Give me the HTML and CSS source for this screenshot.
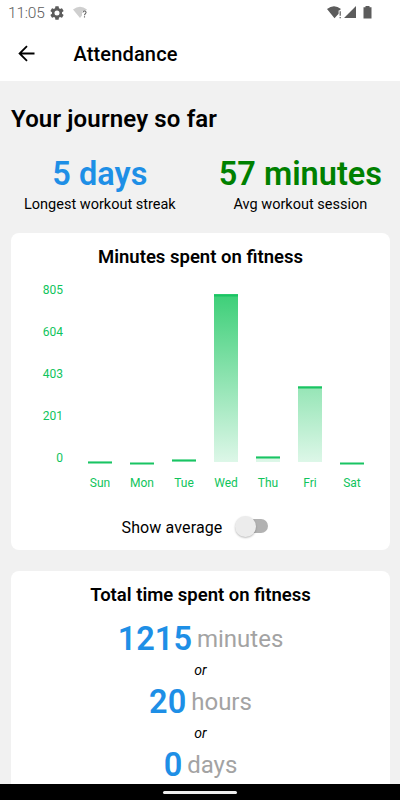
FILE: index.html
```html
<!DOCTYPE html>
<html lang="en">
<head>
<meta charset="utf-8">
<title>Attendance</title>
<link rel="stylesheet" href="styles.css">
</head>
<body>
<div class="phone">
  <div class="status">
    <span class="clock">11:05</span>
    <svg class="gear" width="14" height="14" viewBox="2 2 20 20"><path fill="#5c5c5c" d="M19.14 12.94c.04-.3.06-.61.06-.94s-.02-.64-.07-.94l2.03-1.58a.49.49 0 0 0 .12-.61l-1.92-3.32a.49.49 0 0 0-.59-.22l-2.39.96a7 7 0 0 0-1.62-.94l-.36-2.54a.48.48 0 0 0-.48-.41h-3.84a.48.48 0 0 0-.47.41l-.36 2.54c-.59.24-1.13.57-1.62.94l-2.39-.96a.48.48 0 0 0-.59.22L2.74 8.87a.48.48 0 0 0 .12.61l2.03 1.58a6 6 0 0 0 0 1.88l-2.03 1.58a.49.49 0 0 0-.12.61l1.92 3.32c.12.22.37.29.59.22l2.39-.96c.5.38 1.03.7 1.62.94l.36 2.54c.05.24.24.41.48.41h3.84c.24 0 .44-.17.47-.41l.36-2.54a7 7 0 0 0 1.62-.94l2.39.96c.22.08.47 0 .59-.22l1.92-3.32a.48.48 0 0 0-.12-.61zM12 15.6a3.6 3.6 0 1 1 0-7.2 3.6 3.6 0 0 1 0 7.2z"/></svg>
    <svg class="wifi-q" width="16" height="14" viewBox="0 0 16 14"><path fill="#cfcfcf" d="M0 3.4Q7-1.8 14 3.4L12.5 5H9v4.5L7 12z"/><path fill="none" stroke="#666" stroke-width="1.1" d="M9.9 6.5q.2-1.5 1.6-1.5t1.6 1.3c0 1.2-1.6 1.4-1.6 3M11.5 10.3v1.3"/></svg>
    <svg class="system" width="46" height="14" viewBox="0 0 46 14"><path fill="#5c5c5c" d="M0 2.9Q7-2.2 14 2.9L12.3 4.4H11.6V7.8L7.5 12.3zM12.6 5.2h1.2v4.6h-1.2zM12.6 10.9h1.2V12.2h-1.2zM29 0v12H17zM36.5 1.2h2V0h4v1.2h2V12.6h-8z"/></svg>
  </div>
  <header class="appbar">
    <svg class="back" width="18" height="18" viewBox="0 0 18 18"><path fill="none" stroke="#000" stroke-width="1.8" d="M16.5 8.5H2M9 1.1 1.6 8.5 9 15.9"/></svg>
    <h1>Attendance</h1>
  </header>
  <main>
    <h2>Your journey so far</h2>
    <section class="stats">
      <div class="stat"><strong class="blue">5 days</strong><span>Longest workout streak</span></div>
      <div class="stat"><strong class="green">57 minutes</strong><span>Avg workout session</span></div>
    </section>
    <section class="card chart-card">
      <h3>Minutes spent on fitness</h3>
      <div class="chart">
        <div class="axis"><span>805</span><span>604</span><span>403</span><span>201</span><span>0</span></div>
        <div class="columns">
          <div class="col"><div class="bar" style="height:1px"></div><span>Sun</span></div>
          <div class="col"><div class="bar" style="height:0px"></div><span>Mon</span></div>
          <div class="col"><div class="bar" style="height:3px"></div><span>Tue</span></div>
          <div class="col"><div class="bar" style="height:168px"></div><span>Wed</span></div>
          <div class="col"><div class="bar" style="height:6px"></div><span>Thu</span></div>
          <div class="col"><div class="bar" style="height:76px"></div><span>Fri</span></div>
          <div class="col"><div class="bar" style="height:0px"></div><span>Sat</span></div>
        </div>
      </div>
      <div class="toggle"><span>Show average</span><i class="switch"></i></div>
    </section>
    <section class="card total">
      <h3>Total time spent on fitness</h3>
      <p class="amount"><strong>1215</strong><span>minutes</span></p>
      <p class="or">or</p>
      <p class="amount"><strong>20</strong><span>hours</span></p>
      <p class="or">or</p>
      <p class="amount"><strong>0</strong><span>days</span></p>
    </section>
  </main>
  <footer><i></i></footer>
</div>
</body>
</html>
```

FILE: styles.css
```css
* { box-sizing: border-box; }
body, h1, h2, h3, p { margin: 0; }
body { font-family: Roboto, sans-serif; font-weight: 400; color: #000; background: #f1f1f1; }
.phone { width: 400px; height: 800px; display: flex; flex-direction: column; overflow: hidden; }
.status { height: 26px; flex: none; background: #fff; display: flex; align-items: center; padding: 0 27px 0 8px; color: #5c5c5c; }
.clock { font-size: 15.5px; font-weight: 300; width: 42px; letter-spacing: -.2px; }
.wifi-q { margin-left: 9px; }
.system { margin-left: auto; }
.appbar { height: 55px; flex: none; background: #fff; display: flex; align-items: center; padding-left: 18px; }
.appbar h1 { font-size: 20px; font-weight: 500; line-height: 24px; margin-left: 37.5px; letter-spacing: .15px; }
main { flex: 1; min-height: 0; overflow: hidden; padding: 0 10px 0 11px; }
h2 { font-size: 24px; font-weight: 600; line-height: 28px; margin-top: 24px; letter-spacing: .15px; }
strong { font-weight: 600; }
.stats { display: flex; justify-content: space-between; margin-top: 21px; padding: 0 8px 0 13px; height: 79px; }
.stat { display: flex; flex-direction: column; align-items: center; }
.stat strong { font-size: 32.5px; line-height: 40px; }
.stat span { font-size: 14.5px; line-height: 22px; }
.blue { color: #1e8fe6; }
.green { color: #008000; }
.card { background: #fff; border-radius: 8px; }
.card h3 { font-size: 18.5px; font-weight: 600; line-height: 24px; text-align: center; }
.chart-card { height: 317px; padding-top: 12px; }
.chart { display: flex; color: #10c45c; font-size: 12px; line-height: 14px; margin-top: 14px; height: 229px; }
.axis { width: 52px; height: 182px; display: flex; flex-direction: column; justify-content: space-between; text-align: right; }
.columns { display: flex; margin-left: 16px; height: 212px; align-items: flex-end; }
.col { width: 42px; text-align: center; }
.bar { width: 24px; margin: 0 auto; background: linear-gradient(#3dcf78, #ddf7e8) bottom / 100% 168px no-repeat; }
.bar::before { content: ""; display: block; height: 2px; background: #19c463; transform: translateY(.5px); }
.col span { display: block; margin-top: 14px; height: 19px; }
.toggle { display: flex; justify-content: center; align-items: center; gap: 14px; height: 30px; margin-left: -11px; font-size: 16px; letter-spacing: .12px; }
.switch { width: 32px; height: 14px; border-radius: 7px; background: #b2b2b2; position: relative; top: -1px; }
.switch::before { content: ""; position: absolute; left: -1px; top: -3px; width: 21px; height: 21px; border-radius: 50%; background: #ececec; box-shadow: 0 1px 2px #0004; }
.total { margin-top: 21px; padding-top: 12px; height: 270px; text-align: center; }
.amount { font-size: 24px; line-height: 40px; height: 40px; color: #a3a3a3; display: flex; justify-content: center; gap: 5px; }
.amount strong { font-size: 32.5px; color: #1e8fe6; }
.total h3 + .amount { margin-top: 12px; }
.or { font-size: 14px; font-style: italic; line-height: 23px; }
footer { flex: none; height: 16px; background: #000; display: flex; justify-content: center; align-items: center; }
footer i { width: 74px; height: 3px; border-radius: 2px; background: #eee; }
```
